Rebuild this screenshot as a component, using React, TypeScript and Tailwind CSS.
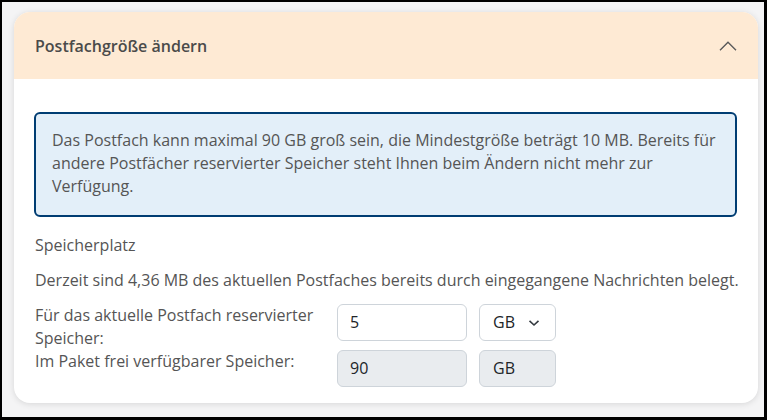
import React from "react";

export default function App() {
  return (
    <div
      className="w-[767px] h-[420px] bg-black pl-[2px] pt-[2px] pr-[3px] pb-[3px]"
      style={{ fontFamily: '"Open Sans", "Noto Sans", sans-serif' }}
    >
      <div className="w-full h-full bg-[#f4f4f5] pl-[12px] pt-[10px] pr-[6px] pb-[14px]">
        <div className="w-[744px] h-[391px] bg-white rounded-[16px] shadow-[0_1px_6px_rgba(0,0,0,0.12)] overflow-hidden flex flex-col">
          <div className="h-[67px] bg-[#feead4] flex items-center justify-between pl-[21px] pr-[21px] shrink-0">
            <span className="text-[16px] font-semibold text-[#4a4a4a]">Postfachgröße ändern</span>
            <svg width="18" height="10" viewBox="0 0 18 10" fill="none" className="mt-[1px]">
              <path d="M1 9.2 L9 1.2 L17 9.2" stroke="#5a5a5a" strokeWidth="1.4" />
            </svg>
          </div>
          <div className="px-[20px] pt-[33px] flex flex-col text-[16px] leading-[23px] text-[#555555]">
            <div className="w-[703px] h-[105px] border-2 border-[#003d73] bg-[#e3eff9] rounded-[6px] px-[16px] py-[15px]">
              Das Postfach kann maximal 90 GB groß sein, die Mindestgröße beträgt 10 MB. Bereits für andere Postfächer reservierter Speicher steht Ihnen beim Ändern nicht mehr zur Verfügung.
            </div>
            <div className="mt-[17px] pl-px">Speicherplatz</div>
            <div className="mt-[12px] pl-px whitespace-nowrap">
              Derzeit sind 4,36 MB des aktuellen Postfaches bereits durch eingegangene Nachrichten belegt.
            </div>
            <div className="mt-[12px] grid grid-cols-[290px_130px_77px] gap-x-[12px] pl-px">
              <div className="h-[46px]">Für das aktuelle Postfach reservierter Speicher:</div>
              <div className="h-[37px] border border-[#ced4da] rounded-[6px] bg-white flex items-center px-[12px] text-[16px] text-[#212529]">
                5
              </div>
              <div className="h-[37px] border border-[#ced4da] rounded-[6px] bg-white flex items-center justify-between pl-[13px] pr-[15px] text-[16px] text-[#212529]">
                <span>GB</span>
                <svg width="12" height="8" viewBox="0 0 12 8" fill="none">
                  <path d="M1.5 1.8 L6 6 L10.5 1.8" stroke="#343a40" strokeWidth="1.6" />
                </svg>
              </div>
              <div className="h-[37px]">Im Paket frei verfügbarer Speicher:</div>
              <div className="h-[37px] border border-[#ced4da] rounded-[6px] bg-[#e9ecef] flex items-center px-[12px] text-[16px] text-[#212529]">
                90
              </div>
              <div className="h-[37px] border border-[#ced4da] rounded-[6px] bg-[#e9ecef] flex items-center pl-[13px] text-[16px] text-[#212529]">
                GB
              </div>
            </div>
          </div>
        </div>
      </div>
    </div>
  );
}
